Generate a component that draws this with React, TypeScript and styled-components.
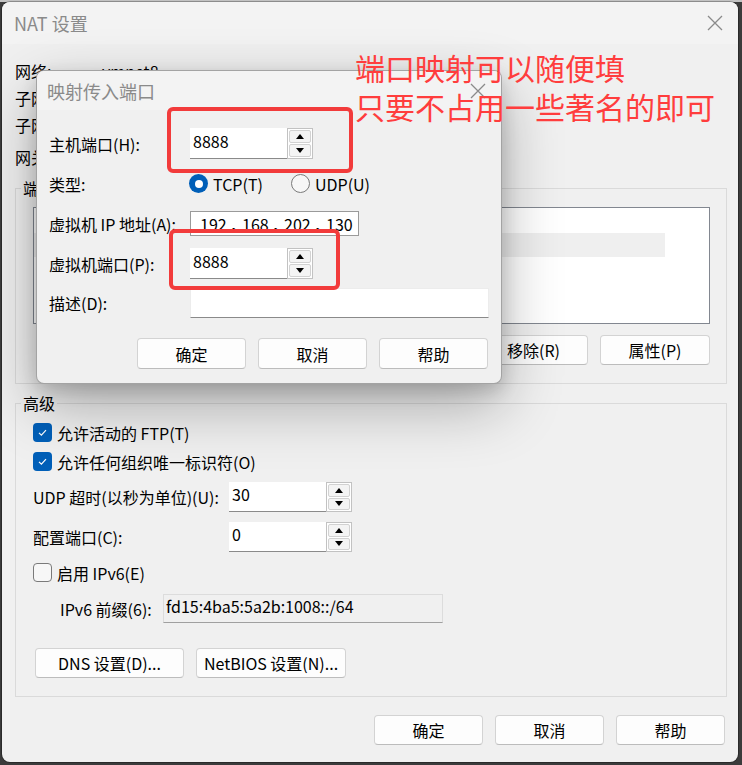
import React from "react";
import styled, { createGlobalStyle } from "styled-components";

const GlobalStyle = createGlobalStyle`
  html, body { margin: 0; padding: 0; }
  body {
    width: 742px;
    height: 765px;
    overflow: hidden;
    background: linear-gradient(#c2c2c2 0 2px, #3b3b3b 2px);
    font-family: "Noto Sans CJK SC", "Noto Sans", sans-serif;
    font-size: 16px;
    color: #000;
  }
`;

const Screen = styled.div`
  width: 742px;
  height: 765px;
  padding: 2px 0 0 2px;
  box-sizing: border-box;
`;

const Window = styled.div`
  position: relative;
  width: 736px;
  height: 760px;
  border-radius: 8px;
  background: #f0f0f0;
  box-shadow: 0 0 0 1px rgba(0, 0, 0, 0.28);
  display: flex;
  flex-direction: column;
  overflow: hidden;
`;

const TitleBar = styled.div<{ $h: number; $pl: number }>`
  height: ${(p) => p.$h}px;
  flex: none;
  display: flex;
  align-items: center;
  justify-content: space-between;
  padding-left: ${(p) => p.$pl}px;
  background: #f3f3f3;
`;

const TitleText = styled.span`
  font-size: 18px;
  line-height: 22px;
  color: #8a8a8a;
`;

const CloseBox = styled.div`
  width: 46px;
  height: 100%;
  display: flex;
  align-items: center;
  justify-content: center;
`;

const CloseIcon = () => (
  <svg width="16" height="16" viewBox="0 0 16 16">
    <path d="M1 1 L15 15 M15 1 L1 15" stroke="#8a8a8a" strokeWidth="1.3" fill="none" />
  </svg>
);

const Body = styled.div`
  flex: 1;
  display: flex;
  flex-direction: column;
  padding-left: 13px;
`;

const InfoRow = styled.div<{ $mt?: number; $h?: number }>`
  display: flex;
  align-items: center;
  height: ${(p) => p.$h ?? 27}px;
  margin-top: ${(p) => p.$mt ?? 0}px;
  line-height: 20px;
`;

const InfoLabel = styled.span`
  width: 87px;
  flex: none;
`;

const GroupBox = styled.div<{ $mt: number; $pb: number }>`
  width: 712px;
  box-sizing: border-box;
  margin-top: ${(p) => p.$mt}px;
  padding-bottom: ${(p) => p.$pb}px;
  border: 1px solid #dadada;
  display: flex;
  flex-direction: column;
`;

const GroupTitle = styled.span`
  align-self: flex-start;
  margin: -9px 0 0 5px;
  padding: 0 2px;
  line-height: 17px;
  background: #f0f0f0;
`;

const ListBox = styled.div`
  margin: 10px 0 0 17px;
  width: 677px;
  height: 117px;
  box-sizing: border-box;
  border: 1px solid #828790;
  background: #fff;
  display: flex;
  flex-direction: column;
`;

const ListHeader = styled.div`
  width: 631px;
  height: 25px;
  background: #fff;
`;

const ListRow = styled.div`
  width: 631px;
  height: 24px;
  background: #efefef;
`;

const ButtonRow = styled.div<{ $mt: number; $pr?: number; $pl?: number; $justify?: string }>`
  display: flex;
  gap: 12px;
  justify-content: ${(p) => p.$justify ?? "flex-end"};
  margin-top: ${(p) => p.$mt}px;
  padding-right: ${(p) => p.$pr ?? 0}px;
  padding-left: ${(p) => p.$pl ?? 0}px;
`;

const Button = styled.button<{ $w?: number; $h?: number }>`
  width: ${(p) => p.$w ?? 109}px;
  height: ${(p) => p.$h ?? 30}px;
  box-sizing: border-box;
  border: 1px solid #d3d3d3;
  border-bottom-color: #bcbcbc;
  border-radius: 4px;
  background: #fdfdfd;
  font-family: inherit;
  font-size: 16px;
  line-height: 20px;
  color: #000;
  padding: 0;
  flex: none;
`;

const CheckRow = styled.div<{ $mt: number; $ml?: number }>`
  display: flex;
  align-items: center;
  gap: 5px;
  height: 19px;
  margin-top: ${(p) => p.$mt}px;
  margin-left: ${(p) => p.$ml ?? 17}px;
  line-height: 20px;
`;

const CheckBoxBox = styled.span<{ $checked: boolean }>`
  width: 19px;
  height: 19px;
  box-sizing: border-box;
  border-radius: 4px;
  flex: none;
  display: flex;
  align-items: center;
  justify-content: center;
  background: ${(p) => (p.$checked ? "#005fb8" : "#f7f7f7")};
  border: ${(p) => (p.$checked ? "none" : "1px solid #7a7a7a")};
`;

const CheckBox = ({ checked }: { checked: boolean }) => (
  <CheckBoxBox $checked={checked}>
    {checked && (
      <svg width="19" height="19" viewBox="0 0 19 19">
        <path d="M6 9.8 L8.4 12.2 L13 7.2" stroke="#fff" strokeWidth="1.2" fill="none" />
      </svg>
    )}
  </CheckBoxBox>
);

const FieldRow = styled.div<{ $mt: number; $ml?: number; $h?: number }>`
  display: flex;
  align-items: center;
  height: ${(p) => p.$h ?? 30}px;
  margin-top: ${(p) => p.$mt}px;
  margin-left: ${(p) => p.$ml ?? 17}px;
  line-height: 20px;
`;

const FieldLabel = styled.span<{ $w: number }>`
  width: ${(p) => p.$w}px;
  flex: none;
  white-space: nowrap;
`;

const SpinWrap = styled.div<{ $h: number }>`
  width: 123px;
  height: ${(p) => p.$h}px;
  display: flex;
  flex: none;
`;

const SpinField = styled.div<{ $pt: number }>`
  flex: 1;
  background: #fff;
  border-bottom: 1px solid #8a8a8a;
  padding: ${(p) => p.$pt}px 0 0 3px;
  line-height: 20px;
`;

const SpinCol = styled.div`
  width: 26px;
  box-sizing: border-box;
  border: 1px solid #c2c2c2;
  padding: 1px;
  display: flex;
  flex-direction: column;
  gap: 1px;
  background: #fff;
`;

const SpinBtn = styled.div`
  flex: 1;
  background: #f4f4f4;
  border: 1px solid #d2d2d2;
  border-radius: 2px;
  display: flex;
  align-items: center;
  justify-content: center;
`;

const Arrow = styled.span<{ $up: boolean }>`
  width: 0;
  height: 0;
  border-left: 4.5px solid transparent;
  border-right: 4.5px solid transparent;
  ${(p) => (p.$up ? "border-bottom: 5px solid #000;" : "border-top: 5px solid #000;")}
`;

const Spin = ({ value, h = 30, pt = 2 }: { value: string; h?: number; pt?: number }) => (
  <SpinWrap $h={h}>
    <SpinField $pt={pt}>{value}</SpinField>
    <SpinCol>
      <SpinBtn>
        <Arrow $up />
      </SpinBtn>
      <SpinBtn>
        <Arrow $up={false} />
      </SpinBtn>
    </SpinCol>
  </SpinWrap>
);

const TextField = styled.div<{ $w: number; $h: number; $disabled?: boolean }>`
  width: ${(p) => p.$w}px;
  height: ${(p) => p.$h}px;
  box-sizing: border-box;
  flex: none;
  background: ${(p) => (p.$disabled ? "#f0f0f0" : "#fff")};
  border: 1px solid ${(p) => (p.$disabled ? "#dcdcdc" : "#ececec")};
  border-bottom-color: ${(p) => (p.$disabled ? "#a0a0a0" : "#8a8a8a")};
  padding: 1px 0 0 2px;
  line-height: 20px;
  color: #000;
`;

const IpField = styled.div<{ $w: number; $h: number }>`
  width: ${(p) => p.$w}px;
  height: ${(p) => p.$h}px;
  box-sizing: border-box;
  flex: none;
  background: #fff;
  border: 1px solid #9a9a9a;
  display: flex;
  align-items: center;
  padding-left: 9px;
  line-height: 20px;
`;

const IpPart = styled.span`
  width: 29px;
`;

const IpDot = styled.span`
  width: 13px;
  padding-left: 2px;
  box-sizing: border-box;
  color: #000;
  font-weight: 700;
`;

const IpBox = ({ parts, w, h }: { parts: string[]; w: number; h: number }) => (
  <IpField $w={w} $h={h}>
    {parts.map((p, i) => (
      <React.Fragment key={i}>
        <IpPart>{p}</IpPart>
        {i < parts.length - 1 && <IpDot>.</IpDot>}
      </React.Fragment>
    ))}
  </IpField>
);

/* Dialog */
const Dialog = styled.div`
  position: absolute;
  left: 34px;
  top: 68px;
  width: 466px;
  height: 314px;
  box-sizing: border-box;
  border: 1px solid rgba(0, 0, 0, 0.32);
  border-radius: 8px;
  background: #f0f0f0;
  box-shadow: 0 22px 60px rgba(0, 0, 0, 0.3), 0 6px 18px rgba(0, 0, 0, 0.16);
  display: flex;
  flex-direction: column;
  overflow: hidden;
  z-index: 2;
`;

const DialogBody = styled.div`
  display: flex;
  flex-direction: column;
  padding-left: 12px;
`;

const RadioGroup = styled.div`
  display: flex;
  align-items: center;
`;

const RadioOption = styled.div`
  display: flex;
  align-items: center;
  gap: 5px;
  width: 102px;
`;

const RadioCircle = styled.span<{ $checked: boolean }>`
  width: 19px;
  height: 19px;
  box-sizing: border-box;
  border-radius: 50%;
  flex: none;
  display: flex;
  align-items: center;
  justify-content: center;
  background: ${(p) => (p.$checked ? "#005fb8" : "#f7f7f7")};
  border: ${(p) => (p.$checked ? "none" : "1px solid #7a7a7a")};
  &::after {
    content: "";
    width: 8px;
    height: 8px;
    border-radius: 50%;
    background: #fff;
    display: ${(p) => (p.$checked ? "block" : "none")};
  }
`;

/* Annotations */
const Note = styled.div`
  position: absolute;
  left: 353px;
  top: 46px;
  font-size: 30px;
  line-height: 39px;
  color: #ff3d3d;
  white-space: nowrap;
  z-index: 3;
`;

const Highlight = styled.div<{ $x: number; $y: number; $w: number; $h: number }>`
  position: absolute;
  left: ${(p) => p.$x}px;
  top: ${(p) => p.$y}px;
  width: ${(p) => p.$w}px;
  height: ${(p) => p.$h}px;
  box-sizing: border-box;
  border: 4px solid #f23b3b;
  border-radius: 6px;
  z-index: 3;
`;

export default function App() {
  return (
    <Screen>
      <GlobalStyle />
      <Window>
        <TitleBar $h={42} $pl={12}>
          <TitleText>NAT 设置</TitleText>
          <CloseBox>
            <CloseIcon />
          </CloseBox>
        </TitleBar>
        <Body>
          <InfoRow $mt={13}>
            <InfoLabel>网络:</InfoLabel>
            <span>vmnet8</span>
          </InfoRow>
          <InfoRow>
            <InfoLabel>子网 IP:</InfoLabel>
          </InfoRow>
          <InfoRow>
            <InfoLabel>子网掩码:</InfoLabel>
          </InfoRow>
          <InfoRow $mt={4} $h={30}>
            <InfoLabel>网关 IP(G):</InfoLabel>
          </InfoRow>

          <GroupBox $mt={16} $pb={18}>
            <GroupTitle>端口转发(F)</GroupTitle>
            <ListBox>
              <ListHeader />
              <ListRow />
            </ListBox>
            <ButtonRow $mt={11} $pr={16}>
              <Button>添加(A)...</Button>
              <Button>移除(R)</Button>
              <Button $w={110}>属性(P)</Button>
            </ButtonRow>
          </GroupBox>

          <GroupBox $mt={19} $pb={18}>
            <GroupTitle>高级</GroupTitle>
            <CheckRow $mt={11}>
              <CheckBox checked />
              <span>允许活动的 FTP(T)</span>
            </CheckRow>
            <CheckRow $mt={10}>
              <CheckBox checked />
              <span>允许任何组织唯一标识符(O)</span>
            </CheckRow>
            <FieldRow $mt={11}>
              <FieldLabel $w={196}>UDP 超时(以秒为单位)(U):</FieldLabel>
              <Spin value="30" />
            </FieldRow>
            <FieldRow $mt={10}>
              <FieldLabel $w={196}>配置端口(C):</FieldLabel>
              <Spin value="0" />
            </FieldRow>
            <CheckRow $mt={11}>
              <CheckBox checked={false} />
              <span>启用 IPv6(E)</span>
            </CheckRow>
            <FieldRow $mt={12} $ml={44} $h={29}>
              <FieldLabel $w={103}>IPv6 前缀(6):</FieldLabel>
              <TextField $w={280} $h={29} $disabled>
                fd15:4ba5:5a2b:1008::/64
              </TextField>
            </FieldRow>
            <ButtonRow $mt={25} $pl={19} $justify="flex-start">
              <Button $w={149}>DNS 设置(D)...</Button>
              <Button $w={150}>NetBIOS 设置(N)...</Button>
            </ButtonRow>
          </GroupBox>

          <ButtonRow $mt={18} $pr={13}>
            <Button>确定</Button>
            <Button>取消</Button>
            <Button>帮助</Button>
          </ButtonRow>
        </Body>

        <Dialog>
          <TitleBar $h={39} $pl={10}>
            <TitleText>映射传入端口</TitleText>
            <CloseBox>
              <CloseIcon />
            </CloseBox>
          </TitleBar>
          <DialogBody>
            <FieldRow $mt={18} $ml={0} $h={31}>
              <FieldLabel $w={141}>主机端口(H):</FieldLabel>
              <Spin value="8888" h={31} pt={3} />
            </FieldRow>
            <FieldRow $mt={15} $ml={0} $h={19}>
              <FieldLabel $w={140}>类型:</FieldLabel>
              <RadioGroup>
                <RadioOption>
                  <RadioCircle $checked />
                  <span>TCP(T)</span>
                </RadioOption>
                <RadioOption>
                  <RadioCircle $checked={false} />
                  <span>UDP(U)</span>
                </RadioOption>
              </RadioGroup>
            </FieldRow>
            <FieldRow $mt={18} $ml={0} $h={25}>
              <FieldLabel $w={141}>虚拟机 IP 地址(A):</FieldLabel>
              <IpBox parts={["192", "168", "202", "130"]} w={169} h={25} />
            </FieldRow>
            <FieldRow $mt={12} $ml={0} $h={31}>
              <FieldLabel $w={141}>虚拟机端口(P):</FieldLabel>
              <Spin value="8888" h={31} pt={3} />
            </FieldRow>
            <FieldRow $mt={9} $ml={0} $h={30}>
              <FieldLabel $w={141}>描述(D):</FieldLabel>
              <TextField $w={299} $h={30} />
            </FieldRow>
            <ButtonRow $mt={20} $pr={13}>
              <Button $h={31}>确定</Button>
              <Button $h={31}>取消</Button>
              <Button $h={31}>帮助</Button>
            </ButtonRow>
          </DialogBody>
        </Dialog>

        <Highlight $x={165} $y={105} $w={186} $h={66} />
        <Highlight $x={167} $y={227} $w={171} $h={61} />
        <Note>
          端口映射可以随便填
          <br />
          只要不占用一些著名的即可
        </Note>
      </Window>
    </Screen>
  );
}
